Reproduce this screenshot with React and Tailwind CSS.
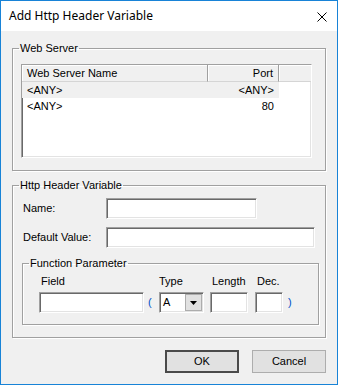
import React from 'react';

const sunken = 'bg-white border border-t-[#a0a0a0] border-l-[#a0a0a0] border-b-white border-r-white shadow-[inset_1px_1px_0_#696969,inset_-1px_-1px_0_#e3e3e3]';

const TextBox = ({ className = '' }) => <div className={`${sunken} h-[21px] ${className}`} />;

const GroupBox = ({ title, className = '', children }) => (
  <fieldset className={`border border-[#a0a0a0] shadow-[inset_1px_1px_0_white,1px_1px_0_white] ${className}`}>
    <legend className="ml-[6px] px-[1px] leading-[13px] text-[11px] text-black">{title}</legend>
    {children}
  </fieldset>
);

const rows = [
  { name: '<ANY>', port: '<ANY>', selected: true },
  { name: '<ANY>', port: '80' },
];

export default function App() {
  return (
    <div className="w-[338px] h-[385px] border border-[#1883d7] bg-[#f0f0f0] flex flex-col font-['Liberation_Sans',Arial,sans-serif] text-[11px] text-black">
      {/* title bar */}
      <div className="h-[30px] bg-white flex items-center justify-between pl-[8px] pr-[10px]">
        <span className="text-[12px] font-['Noto_Sans',sans-serif] leading-none">Add Http Header Variable</span>
        <svg width="10" height="10" viewBox="0 0 10 10" className="mt-[1px]">
          <path d="M0.5 0.5 L9.5 9.5 M9.5 0.5 L0.5 9.5" stroke="#000" strokeWidth="1" />
        </svg>
      </div>

      <div className="px-[11px] pt-[11px]">
        <GroupBox title="Web Server" className="h-[129px]">
          <div className={`${sunken} ml-[8px] mt-[9px] w-[291px] h-[94px] flex flex-col overflow-hidden`}>
            <div className="flex h-[17px] bg-white text-[11px]">
              <div className="w-[186px] border-r border-r-[#a0a0a0] border-b border-b-[#d5d5d5] bg-[#f0f0f0] shadow-[inset_1px_1px_0_white] pl-[5px] leading-[16px]">Web Server Name</div>
              <div className="w-[71px] border-r border-r-[#a0a0a0] border-b border-b-[#d5d5d5] bg-[#f0f0f0] shadow-[inset_1px_1px_0_white] pr-[5px] text-right leading-[16px]">Port</div>
              <div className="flex-1 border-b border-b-[#d5d5d5] bg-[#f0f0f0] shadow-[inset_1px_1px_0_white]" />
            </div>
            {rows.map((r, i) => (
              <div key={i} className={`flex h-[16px] w-[257px] leading-[16px] ${r.selected ? 'bg-[#f0f0f0]' : ''}`}>
                <div className="w-[186px] pl-[5px]">{r.name}</div>
                <div className="w-[71px] pr-[5px] text-right">{r.port}</div>
              </div>
            ))}
          </div>
        </GroupBox>

        <GroupBox title="Http Header Variable" className="mt-[8px] h-[159px]">
          <div className="pl-[10px] pt-[6px] flex flex-col gap-[8px]">
            <div className="flex items-center">
              <span className="w-[83px]">Name:</span>
              <TextBox className="w-[151px]" />
            </div>
            <div className="flex items-center">
              <span className="w-[83px]">Default Value:</span>
              <TextBox className="w-[209px]" />
            </div>
          </div>

          <GroupBox title="Function Parameter" className="ml-[9px] mt-[9px] w-[297px] h-[68px]">
            <div className="flex items-end pl-[16px] pt-[5px]">
              <div className="flex flex-col gap-[4px] w-[105px]">
                <span className="pl-[2px] leading-[13px]">Field</span>
                <TextBox />
              </div>
              <span className="w-[15px] h-[21px] pl-[4px] leading-[21px] text-[#0050c8]">(</span>
              <div className="flex flex-col gap-[4px] w-[45px]">
                <span className="leading-[13px]">Type</span>
                <div className={`${sunken} h-[21px] flex items-center justify-between pl-[3px] pr-[1px]`}>
                  <span>A</span>
                  <div className="w-[17px] h-[17px] bg-[#e1e1e1] border border-[#adadad] flex items-center justify-center">
                    <svg width="7" height="4" viewBox="0 0 7 4"><path d="M0 0 H7 L3.5 4 Z" fill="#000" /></svg>
                  </div>
                </div>
              </div>
              <div className="flex flex-col gap-[4px] w-[38px] ml-[6px]">
                <span className="pl-[2px] leading-[13px]">Length</span>
                <TextBox />
              </div>
              <div className="flex flex-col gap-[4px] w-[28px] ml-[7px]">
                <span className="pl-[2px] leading-[13px]">Dec.</span>
                <TextBox />
              </div>
              <span className="h-[21px] pl-[5px] leading-[21px] text-[#0050c8]">)</span>
            </div>
          </GroupBox>
        </GroupBox>

        <div className="flex justify-end gap-[13px] mt-[12px]">
          <button className="w-[74px] h-[23px] bg-[#e1e1e1] border-2 border-[#4a4a4a] text-[11px]">OK</button>
          <button className="w-[74px] h-[23px] bg-[#e1e1e1] border border-[#adadad] text-[11px]">Cancel</button>
        </div>
      </div>
    </div>
  );
}
